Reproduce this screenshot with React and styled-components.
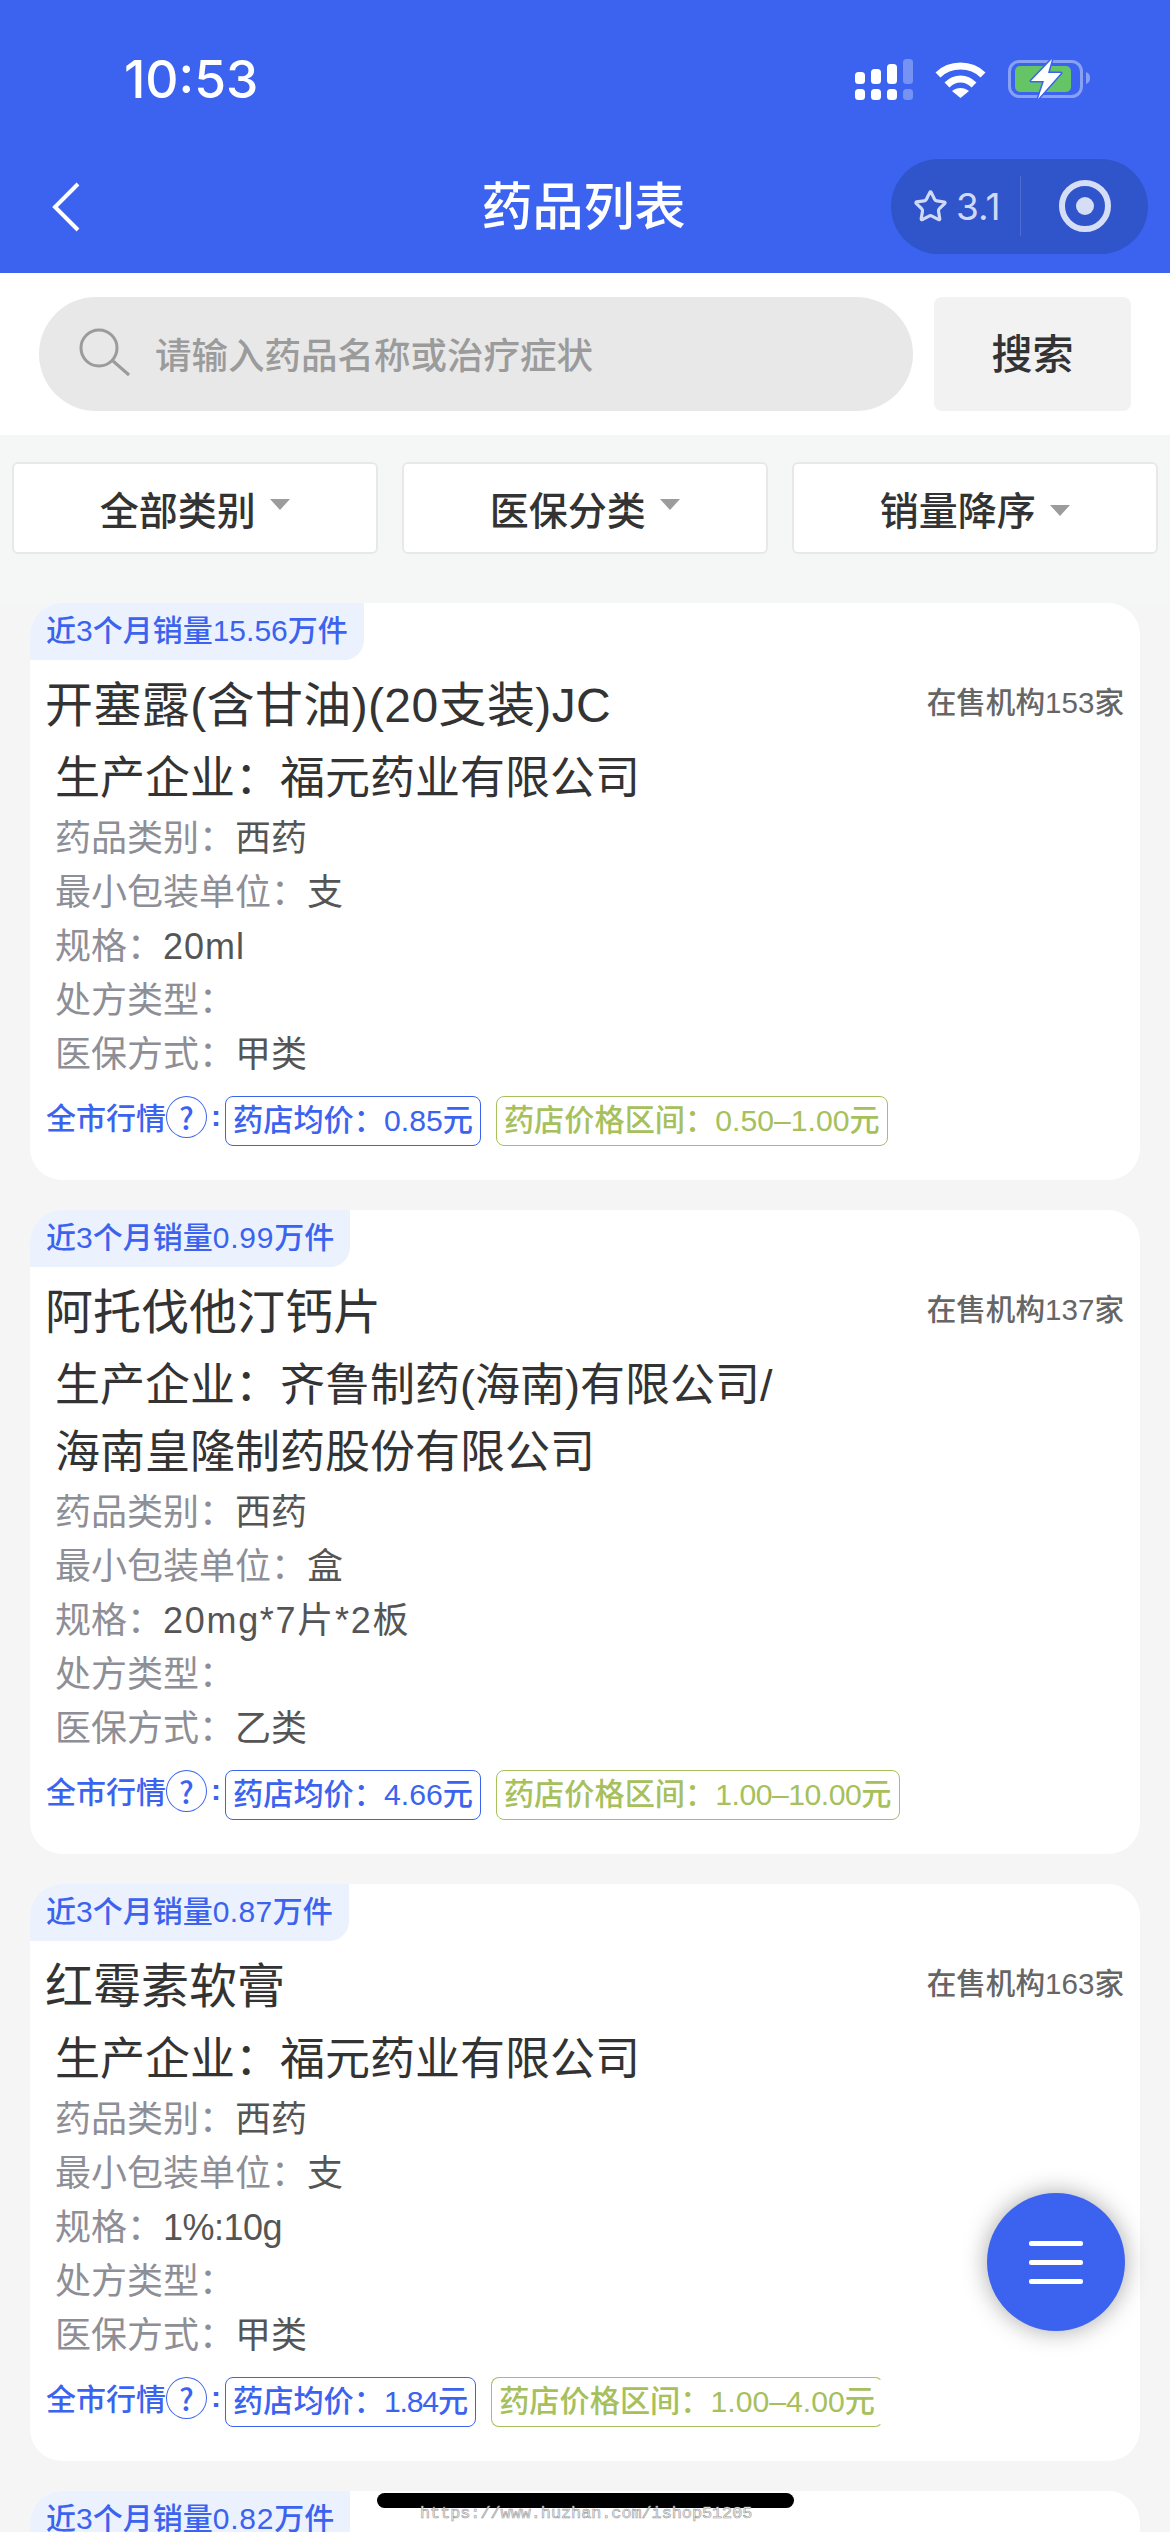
import React from "react";
import styled, { createGlobalStyle } from "styled-components";
import { Star } from "lucide-react";

const BLUE = "#3b63ef";
const GREEN = "#a6c05c";

const Global = createGlobalStyle`
  html, body { margin: 0; padding: 0; background: #f5f5f5; }
  * { box-sizing: border-box; }
  body { font-family: "Liberation Sans", "Noto Sans CJK SC", sans-serif; color: #333; }
`;

const Page = styled.div`
  position: relative;
  width: 1170px;
  height: 2532px;
  overflow: hidden;
  background: #f5f5f5;
`;

const Header = styled.header`
  height: 273px;
  background: ${BLUE};
  color: #fff;
`;

const StatusBar = styled.div`
  height: 140px;
  padding: 18px 79px 0 124px;
  display: flex;
  align-items: center;
  justify-content: space-between;
`;

const Time = styled.div`
  font-family: "Inter", sans-serif;
  font-size: 51.5px;
  font-weight: 500;
`;

const StatusIcons = styled.div`
  display: flex;
  align-items: center;
  gap: 22px;
`;

const Nav = styled.div`
  height: 133px;
  padding: 0 22px 0 52px;
  display: flex;
  align-items: center;
  justify-content: space-between;
`;

const Back = styled.svg`
  width: 28px;
  height: 50px;
  flex: none;
`;

const NavTitle = styled.h1`
  margin: 2px 0 0 196px;
  font-size: 51px;
  font-weight: 500;
  line-height: 1;
  flex: none;
  width: 204px;
  white-space: nowrap;
`;

const Capsule = styled.div`
  width: 257px;
  height: 95px;
  border-radius: 48px;
  background: #3055cb;
  color: #d0d9f5;
  display: flex;
  align-items: center;
  padding-left: 22px;
  flex: none;
  margin-bottom: 1px;
`;

const Rating = styled.span`
  font-family: "Inter", sans-serif;
  font-size: 37px;
  margin-left: 8px;
  width: 64px;
`;

const CapsuleDivider = styled.span`
  width: 1px;
  height: 60px;
  background: rgba(255, 255, 255, 0.14);
`;

const Target = styled.svg`
  width: 52px;
  height: 52px;
  margin-left: 38px;
`;

const SearchBar = styled.section`
  height: 162px;
  padding: 24px 39px;
  background: #fff;
  display: flex;
  gap: 21px;
`;

const SearchInput = styled.div`
  flex: 1;
  height: 114px;
  border-radius: 57px;
  background: #e8e8e8;
  display: flex;
  align-items: center;
  padding: 0 0 2px 40px;
  gap: 24px;
  color: #9b9b9b;
  font-size: 36.5px;
  font-weight: 500;
`;

const SearchIcon = styled.svg`
  width: 52px;
  height: 50px;
  flex: none;
`;

const SearchButton = styled.button`
  width: 197px;
  height: 114px;
  border: 0;
  border-radius: 8px;
  background: #f2f2f2;
  color: #333;
  font: 500 41px "Liberation Sans", "Noto Sans CJK SC", sans-serif;
  padding: 0 0 6px;
`;

const Filters = styled.section`
  display: grid;
  grid-template-columns: repeat(3, 365.5px);
  gap: 24.5px;
  padding: 27px 12px 49px;
  background: #f5f7f7;
`;

const Filter = styled.div`
  height: 92px;
  border: 2px solid #e8e8e8;
  border-radius: 6px;
  background: #fff;
  display: flex;
  align-items: center;
  justify-content: center;
  gap: 14px;
  font-size: 39px;
  font-weight: 500;
  color: #333;
`;

const Caret = styled.span`
  width: 0;
  height: 0;
  border-left: 10px solid transparent;
  border-right: 10px solid transparent;
  border-top: 11px solid #9c9c9c;
  transform: translateY(${(p) => (p.$low ? 2 : -4)}px);
`;

const List = styled.main`
  padding: 0 30px;
  display: flex;
  flex-direction: column;
  gap: 30px;
`;

const Card = styled.article`
  background: #fff;
  border-radius: 32px;
  padding-bottom: 34px;
  overflow: hidden;
`;

const SalesTag = styled.div`
  display: inline-block;
  height: 57px;
  line-height: 56px;
  padding: 0 16px;
  font-size: 30px;
  font-weight: 500;
  color: ${BLUE};
  background: #ebf2fd;
  border-bottom-right-radius: 20px;
  vertical-align: top;
`;

const Num = styled.span`
  letter-spacing: ${(p) => p.$tracking || 0}px;
`;

const TitleRow = styled.div`
  height: 85px;
  padding: 0 16px 4px 15px;
  display: flex;
  align-items: center;
  justify-content: space-between;
`;

const Title = styled.h2`
  margin: 0;
  font-size: 48px;
  font-weight: 400;
  color: #333;
  letter-spacing: ${(p) => p.$tracking || 0}px;
`;

const Outlets = styled.span`
  font-size: 29.6px;
  font-weight: 500;
  color: #666;
`;

const Maker = styled.div`
  padding: 0 0 0 25px;
  font-size: 45px;
  line-height: 67px;
  color: #333;
`;

const MakerLine = styled.span`
  display: block;
`;

const Details = styled.dl`
  margin: 0;
  padding: 0 25px;
`;

const Detail = styled.div`
  height: 54px;
  line-height: 54px;
  font-size: 36px;
  display: flex;
`;

const Label = styled.dt`
  color: #8e8e96;
`;

const Value = styled.dd`
  margin: 0;
  color: #555;
  letter-spacing: ${(p) => p.$tracking || 0}px;
`;

const Market = styled.div`
  margin-top: 14px;
  padding-left: 16px;
  height: 50px;
  display: flex;
  align-items: flex-start;
  font-size: 30px;
  font-weight: 500;
  color: ${BLUE};
`;

const MarketLabel = styled.span`
  line-height: 46px;
`;

const Help = styled.span`
  width: 41px;
  height: 42px;
  border: 1px solid ${BLUE};
  border-radius: 50%;
  display: flex;
  align-items: center;
  justify-content: center;
  font-family: "Noto Sans CJK SC", sans-serif;
  font-size: 30px;
  font-weight: 500;
  line-height: 1;
`;

const Colon = styled.span`
  width: 18px;
  line-height: 40px;
  text-align: center;
  font-weight: 700;
`;

const Pill = styled.span`
  height: 50px;
  line-height: 47px;
  padding: 0 7px;
  border: 1.5px solid ${(p) => p.$color};
  border-right-color: ${(p) => (p.$open ? "transparent" : p.$color)};
  border-radius: 8px;
  color: ${(p) => p.$color};
  font-size: 30.2px;
  margin-right: 15px;
  white-space: nowrap;
`;

const Fab = styled.button`
  position: absolute;
  left: 987px;
  top: 2193px;
  width: 138px;
  height: 138px;
  border: 0;
  border-radius: 50%;
  background: ${BLUE};
  box-shadow: 0 0 24px rgba(0, 0, 0, 0.35);
  display: flex;
  flex-direction: column;
  align-items: center;
  justify-content: center;
  gap: 14px;
  padding: 0;
`;

const FabLine = styled.span`
  width: 54px;
  height: 5px;
  border-radius: 2px;
  background: #fff;
`;

const HomeBar = styled.div`
  position: absolute;
  left: 377px;
  top: 2493px;
  width: 417px;
  height: 15px;
  border-radius: 8px;
  background: #000;
`;

const Watermark = styled.div`
  position: absolute;
  left: 420px;
  top: 2504px;
  font: 16.8px/20px "Liberation Mono", monospace;
  color: #f4f4f4;
  -webkit-text-stroke: 0.6px #9a9a9a;
  white-space: nowrap;
`;

const drugs = [
  { sales: "15.56", name: "开塞露(含甘油)(20支装)JC", nameTrack: 0.38, outlets: 153, maker: ["福元药业有限公司"], type: "西药", unit: "支", spec: "20ml", specTrack: 1, ins: "甲类", avg: "0.85", range: "0.50–1.00" },
  { sales: "0.99", salesTrack: 0.8, name: "阿托伐他汀钙片", outlets: 137, maker: ["齐鲁制药(海南)有限公司/", "海南皇隆制药股份有限公司"], type: "西药", unit: "盒", spec: "20mg*7片*2板", specTrack: 1.7, ins: "乙类", avg: "4.66", range: "1.00–10.00", rangeTrack: -0.5 },
  { sales: "0.87", salesTrack: 0.4, name: "红霉素软膏", outlets: 163, maker: ["福元药业有限公司"], type: "西药", unit: "支", spec: "1%:10g", specTrack: -0.5, ins: "甲类", avg: "1.84", avgTrack: -1.2, range: "1.00–4.00", open: true },
  { sales: "0.82", salesTrack: 0.8 },
];

const Signal = () => (
  <svg width="58" height="41" viewBox="0 0 58 41">
    <g fill="#fff">
      <rect x="0" y="13" width="10" height="12" rx="3.5" />
      <rect x="16" y="10" width="10" height="15" rx="3.5" />
      <rect x="32" y="5" width="10" height="20" rx="3.5" />
      <rect x="0" y="30" width="10" height="11" rx="3.5" />
      <rect x="16" y="30" width="10" height="11" rx="3.5" />
      <rect x="32" y="30" width="10" height="11" rx="3.5" />
    </g>
    <g fill="#fff" opacity="0.3">
      <rect x="48" y="0" width="10" height="25" rx="3.5" />
      <rect x="48" y="30" width="10" height="11" rx="3.5" />
    </g>
  </svg>
);

const Wifi = () => (
  <svg width="51" height="38" viewBox="0 0 51 38">
    <path d="M3 15C15 3 36 3 48 15" fill="none" stroke="#fff" strokeWidth="7" />
    <path d="M12 25C20 17 31 17 39 25" fill="none" stroke="#fff" strokeWidth="7" />
    <path d="M17 31C22 27 29 27 34 31L25.5 38Z" fill="#fff" />
  </svg>
);

const Battery = () => (
  <svg width="83" height="42" viewBox="0 0 83 42">
    <rect x="1.5" y="3.5" width="72" height="35" rx="10" fill="none" stroke="#fff" strokeOpacity="0.4" strokeWidth="3" />
    <rect x="7" y="8" width="56" height="26" rx="5" fill="#65c466" />
    <path d="M78 14C81 15 82 17 82 20S81 25 78 26Z" fill="#fff" fillOpacity="0.4" />
    <path d="M44 1L23 23H36L30 41L53 15H40Z" fill="#fff" stroke={BLUE} strokeWidth="3" paintOrder="stroke" strokeLinejoin="round" />
  </svg>
);

function App() {
  return (
    <Page>
      <Global />
      <Header>
        <StatusBar>
          <Time>10:53</Time>
          <StatusIcons>
            <Signal />
            <Wifi />
            <Battery />
          </StatusIcons>
        </StatusBar>
        <Nav>
          <Back viewBox="0 0 28 50">
            <path d="M26 2L3 25L26 48" fill="none" stroke="#fff" strokeWidth="4" />
          </Back>
          <NavTitle>药品列表</NavTitle>
          <Capsule>
            <Star size={35} strokeWidth={2.2} />
            <Rating>3.1</Rating>
            <CapsuleDivider />
            <Target viewBox="0 0 52 52">
              <circle cx="26" cy="26" r="23" fill="none" stroke="#d6def6" strokeWidth="6" />
              <circle cx="26" cy="26" r="9" fill="#d6def6" />
            </Target>
          </Capsule>
        </Nav>
      </Header>

      <SearchBar>
        <SearchInput>
          <SearchIcon viewBox="0 0 52 50">
            <circle cx="20" cy="20" r="18" fill="none" stroke="#9b9b9b" strokeWidth="3" />
            <path d="M34 33L50 47" stroke="#9b9b9b" strokeWidth="3" />
          </SearchIcon>
          请输入药品名称或治疗症状
        </SearchInput>
        <SearchButton>搜索</SearchButton>
      </SearchBar>

      <Filters>
        <Filter>全部类别<Caret /></Filter>
        <Filter>医保分类<Caret /></Filter>
        <Filter>销量降序<Caret $low /></Filter>
      </Filters>

      <List>
        {drugs.map((d) => (
          <Card key={d.sales}>
            <SalesTag>近3个月销量<Num $tracking={d.salesTrack}>{d.sales}</Num>万件</SalesTag>
            {d.name && (
              <>
                <TitleRow>
                  <Title $tracking={d.nameTrack}>{d.name}</Title>
                  <Outlets>在售机构{d.outlets}家</Outlets>
                </TitleRow>
                <Maker>
                  {d.maker.map((line, i) => (
                    <MakerLine key={line}>{i === 0 ? "生产企业：" : ""}{line}</MakerLine>
                  ))}
                </Maker>
                <Details>
                  <Detail><Label>药品类别：</Label><Value>{d.type}</Value></Detail>
                  <Detail><Label>最小包装单位：</Label><Value>{d.unit}</Value></Detail>
                  <Detail><Label>规格：</Label><Value $tracking={d.specTrack}>{d.spec}</Value></Detail>
                  <Detail><Label>处方类型：</Label><Value /></Detail>
                  <Detail><Label>医保方式：</Label><Value>{d.ins}</Value></Detail>
                </Details>
                <Market>
                  <MarketLabel>全市行情</MarketLabel>
                  <Help>?</Help>
                  <Colon>:</Colon>
                  <Pill $color={BLUE}>药店均价：<Num $tracking={d.avgTrack}>{d.avg}</Num>元</Pill>
                  <Pill $color={GREEN} $open={d.open}>药店价格区间：<Num $tracking={d.rangeTrack}>{d.range}</Num>元</Pill>
                </Market>
              </>
            )}
          </Card>
        ))}
      </List>

      <Fab aria-label="菜单">
        <FabLine />
        <FabLine />
        <FabLine />
      </Fab>
      <HomeBar />
      <Watermark>https://www.huzhan.com/ishop51205</Watermark>
    </Page>
  );
}

export default App;
